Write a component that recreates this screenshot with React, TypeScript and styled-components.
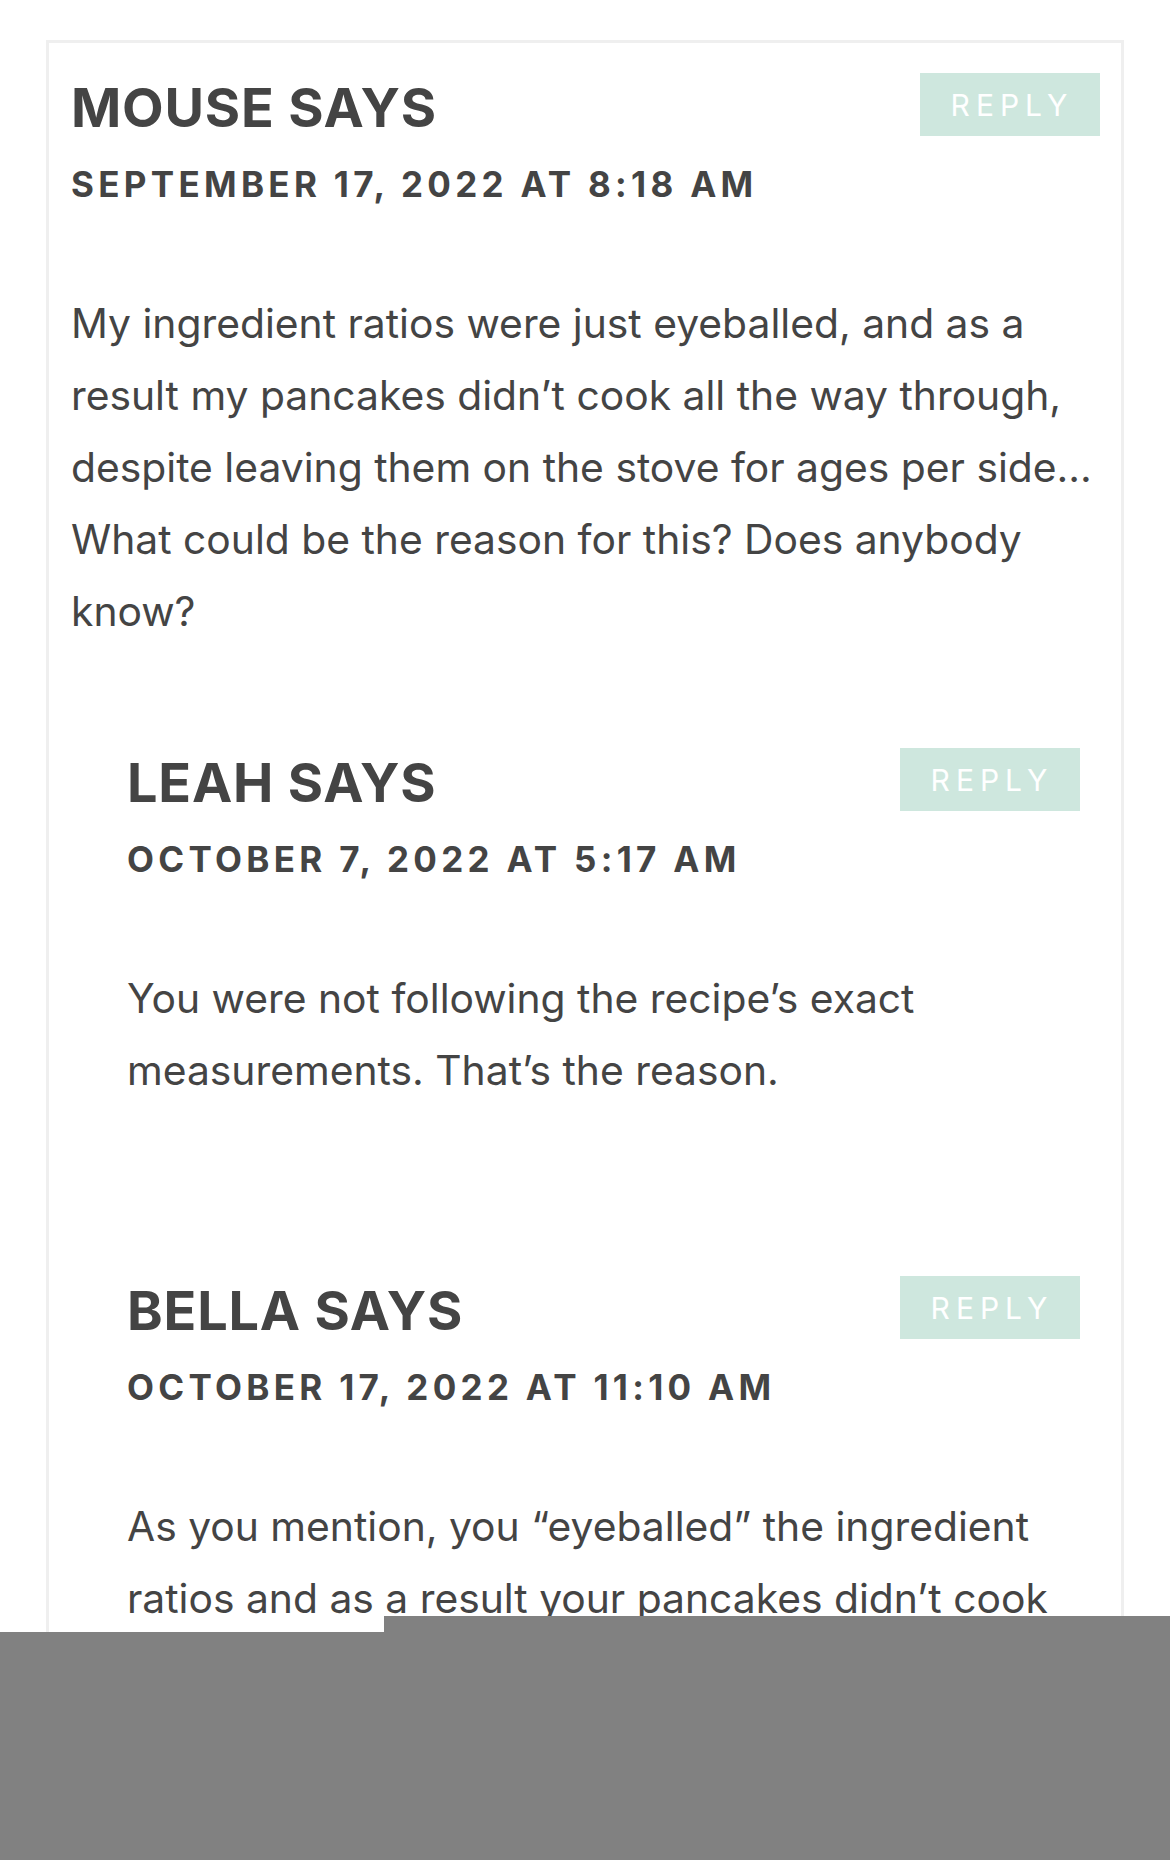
import React from 'react';
import styled, { createGlobalStyle } from 'styled-components';

const GlobalStyle = createGlobalStyle`
    html, body {
        margin: 0;
        padding: 0;
        background: #ffffff;
    }
    body {
        font-family: Inter, "Liberation Sans", sans-serif;
        color: #444444;
        -webkit-font-smoothing: antialiased;
    }
`;

const Page = styled.div`
    position: relative;
    height: 1860px;
    overflow: hidden;
    padding: 40px 46px 0 46px;
    box-sizing: border-box;
`;

const CommentCard = styled.section`
    border: 3px solid #efefef;
    padding: 30px 21px 80px 22px;
`;

const Article = styled.article`
    & + & {
        margin-top: 170px;
    }
`;

const Header = styled.header`
    display: flex;
    justify-content: space-between;
    align-items: flex-start;
    gap: 24px;
`;

const Meta = styled.div`
    display: flex;
    flex-direction: column;
    padding-top: 2px;
`;

const Author = styled.h3`
    margin: 0;
    font-size: 54px;
    line-height: 65px;
    font-weight: 700;
    letter-spacing: 0.8px;
    text-transform: uppercase;
`;

const Timestamp = styled.time`
    display: block;
    margin-top: 23px;
    font-size: 35px;
    line-height: 42px;
    font-weight: 700;
    letter-spacing: 4.3px;
    text-transform: uppercase;
`;

const ReplyButton = styled.button`
    flex: 0 0 auto;
    width: 180px;
    height: 63px;
    border: 0;
    background: #cee7de;
    color: #ffffff;
    font-family: Inter, "Liberation Sans", sans-serif;
    font-size: 30px;
    font-weight: 400;
    letter-spacing: 6px;
    padding: 0 0 0 4px;
    text-transform: uppercase;
    cursor: pointer;
`;

const Body = styled.p`
    margin: 82px 0 0 0;
    font-size: 40.8px;
    line-height: 72px;
    font-weight: 400;
`;

const Replies = styled.div`
    margin: 101px 20px 0 56px;
`;

const Mask = styled.div<{ $top: number; $left: number; $right: number }>`
    position: absolute;
    top: ${(p) => p.$top}px;
    left: ${(p) => p.$left}px;
    right: ${(p) => p.$right}px;
    bottom: 0;
    background: #818181;
`;

interface CommentData {
    id: string;
    author: string;
    date: string;
    text: string;
    replies?: CommentData[];
}

const comments: CommentData[] = [
    {
        id: 'mouse',
        author: 'Mouse',
        date: 'September 17, 2022 at 8:18 am',
        text: 'My ingredient ratios were just eyeballed, and as a result my pancakes didn’t cook all the way through, despite leaving them on the stove for ages per side… What could be the reason for this? Does anybody know?',
        replies: [
            {
                id: 'leah',
                author: 'Leah',
                date: 'October 7, 2022 at 5:17 am',
                text: 'You were not following the recipe’s exact measurements. That’s the reason.',
            },
            {
                id: 'bella',
                author: 'Bella',
                date: 'October 17, 2022 at 11:10 am',
                text: 'As you mention, you “eyeballed” the ingredient ratios and as a result your pancakes didn’t cook all the way through. Try measuring next time.',
            },
        ],
    },
];

const Comment = ({ comment }: { comment: CommentData }) => (
    <Article>
        <Header>
            <Meta>
                <Author>{comment.author} says</Author>
                <Timestamp>{comment.date}</Timestamp>
            </Meta>
            <ReplyButton type="button">Reply</ReplyButton>
        </Header>
        <Body>{comment.text}</Body>
        {comment.replies && (
            <Replies>
                {comment.replies.map((reply) => (
                    <Comment comment={reply} key={reply.id} />
                ))}
            </Replies>
        )}
    </Article>
);

export default function App() {
    return (
        <>
            <GlobalStyle />
            <Page>
                <CommentCard>
                    {comments.map((comment) => (
                        <Comment comment={comment} key={comment.id} />
                    ))}
                </CommentCard>
                <Mask $top={1616} $left={384} $right={0} />
                <Mask $top={1632} $left={0} $right={786} />
            </Page>
        </>
    );
}
